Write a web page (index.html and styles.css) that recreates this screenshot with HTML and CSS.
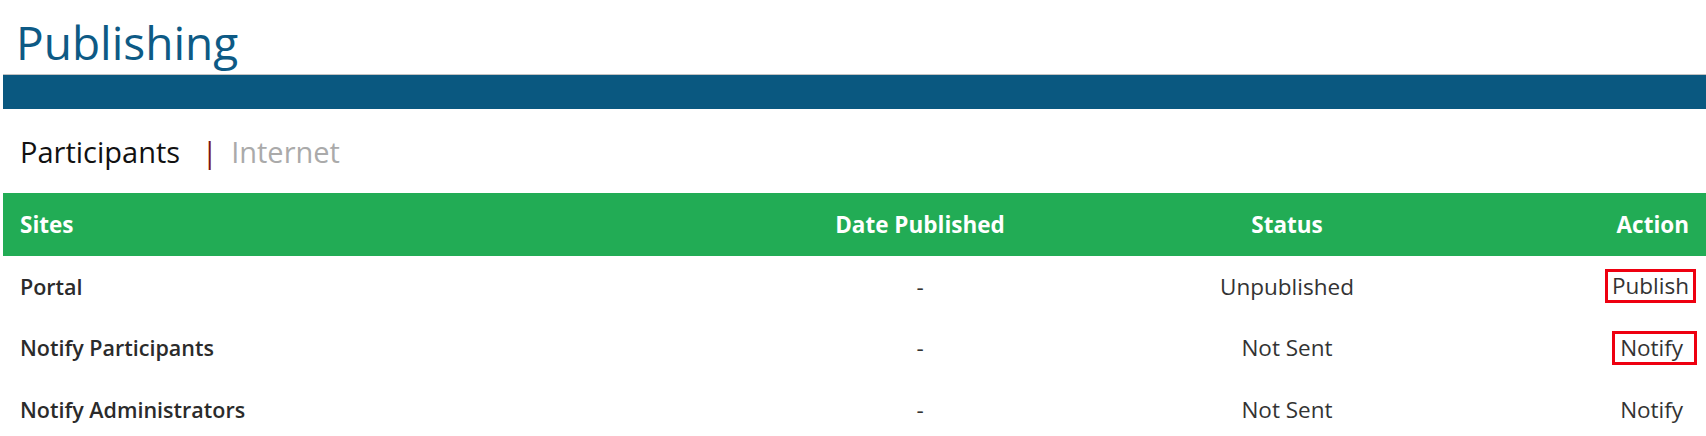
FILE: index.html
```html
<!DOCTYPE html>
<html lang="en">
<head>
  <meta charset="UTF-8" />
  <title>Publishing</title>
  <link rel="stylesheet" href="styles.css">
</head>
<body>
<div class="page">
  <h1 class="title">Publishing</h1>
  <div class="band"></div>

  <div class="tabs">
    <a class="tab active" href="#">Participants</a>
    <span class="sep">|</span>
    <a class="tab" href="#">Internet</a>
  </div>

  <table class="sites">
    <colgroup>
      <col class="c-site">
      <col class="c-date">
      <col class="c-status">
      <col class="c-action">
    </colgroup>
    <thead>
    <tr>
      <th class="left">Sites</th>
      <th>Date Published</th>
      <th>Status</th>
      <th class="right">Action</th>
    </tr>
    </thead>
    <tbody>
    <tr>
      <td class="left name">Portal</td>
      <td>-</td>
      <td>Unpublished</td>
      <td class="right"><a class="act marked mark-publish" href="#">Publish</a></td>
    </tr>
    <tr>
      <td class="left name">Notify Participants</td>
      <td>-</td>
      <td>Not Sent</td>
      <td class="right"><a class="act marked mark-notify" href="#">Notify&nbsp;</a></td>
    </tr>
    <tr>
      <td class="left name">Notify Administrators</td>
      <td>-</td>
      <td>Not Sent</td>
      <td class="right"><a class="act" href="#">Notify&nbsp;</a></td>
    </tr>
    </tbody>
  </table>
</div>
</body>
</html>
```

FILE: styles.css
```css
* {
  box-sizing: border-box;
}
body {
  margin: 0;
  font-family: 'Open Sans', 'Noto Sans', Arial, sans-serif;
  color: #333;
  background: #fff;
  overflow: hidden;
}

.page {
  padding-left: 3px;
}

/* 標題 */
.title {
  margin: 0;
  padding: 12px 0 0 13px;
  height: 74px;
  font-size: 46px;
  line-height: 61px;
  font-weight: 400;
  color: #0d5a85;
}

.band {
  height: 35px;
  border-top: 1px solid #c2c2c2;
  background: #0a5880;
}

/* 分頁 */
.tabs {
  margin-top: 23px;
  padding-left: 17px;
  height: 39px;
  font-size: 29px;
  line-height: 39px;
  white-space: nowrap;
}
.tab {
  color: #aaa;
  text-decoration: none;
}
.tab.active {
  color: #111;
}
.sep {
  color: #7b1414;
  margin: 0 6px 0 14px;
}

/* 表格 */
.sites {
  margin-top: 22px;
  width: 100%;
  border-collapse: collapse;
  table-layout: fixed;
  font-size: 22.5px;
}
.c-site { width: 734px; }
.c-date { width: 366px; }
.c-status { width: 368px; }
.c-action { width: 235px; }

.sites thead {
  background: #22ac55;
  color: #fff;
}
.sites th {
  height: 63px;
  padding: 0 17px 1px 17px;
  font-weight: 700;
  text-align: center;
}
.sites td {
  height: 61.5px;
  padding: 0 17px 1px 17px;
  text-align: center;
}
.sites .left {
  text-align: left;
}
.sites .right {
  text-align: right;
}
.sites .name {
  font-size: 21.5px;
  font-weight: 600;
  color: #2b2b2b;
}

.act {
  color: #333;
  text-decoration: none;
}
/* 紅框標示 */
.marked {
  display: inline-block;
  line-height: 28px;
  border: 3px solid #ee0010;
}
.mark-publish {
  padding: 0 4px;
  margin: 0 -7px;
}
.mark-notify {
  padding: 0 5px;
  margin: 0 -8px;
}
```
